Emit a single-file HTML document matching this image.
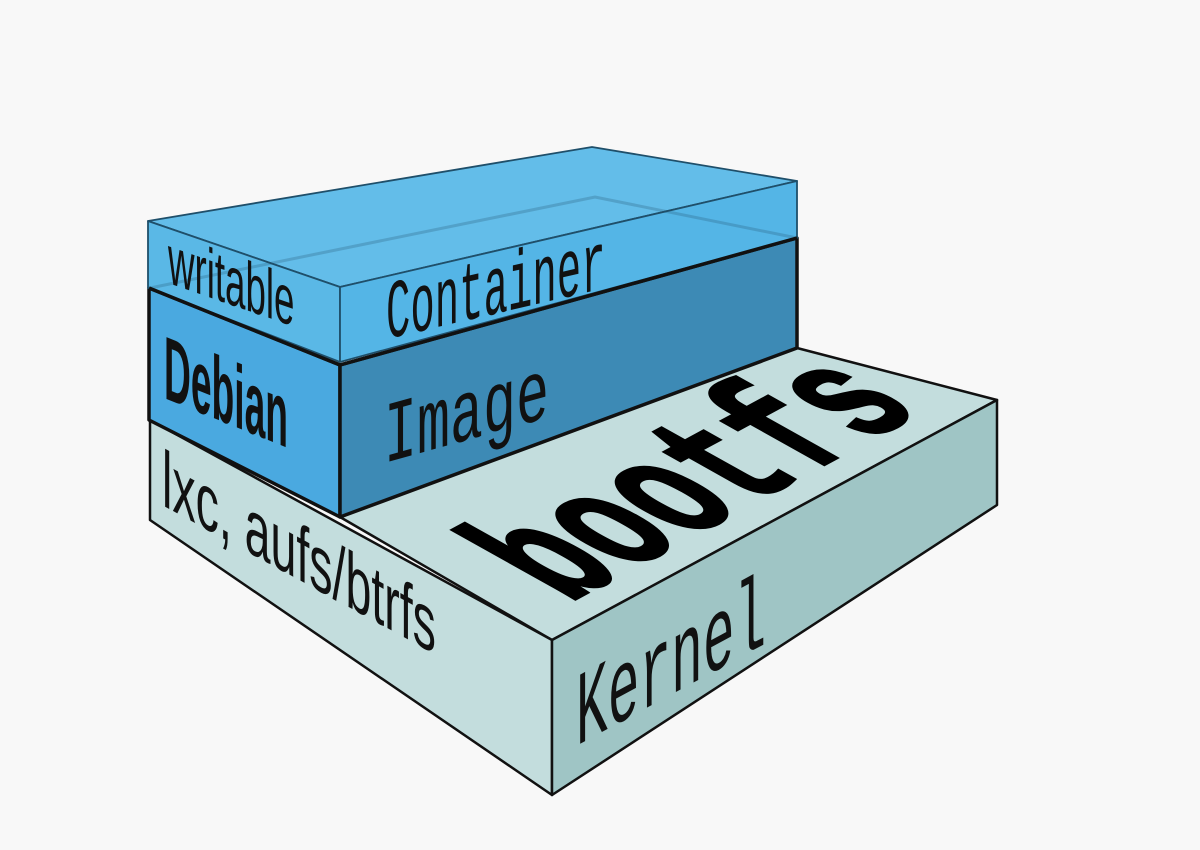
<!DOCTYPE html>
<html><head><meta charset="utf-8"><style>
html,body{margin:0;padding:0;background:#f8f8f8;}
svg{display:block;}
</style></head><body>
<svg width="1200" height="850" viewBox="0 0 1200 850" xmlns="http://www.w3.org/2000/svg">
<rect width="1200" height="850" fill="#f8f8f8"/>
<g stroke="#111" stroke-width="2.5" stroke-linejoin="round">
  <polygon points="340,517 797,348 997,400 552,640" fill="#c3dddd"/>
  <polygon points="150,420 552,640 552,795 150,520" fill="#c3dddd"/>
  <polygon points="552,640 997,400 997,505 552,795" fill="#9fc5c5"/>
  <polygon points="149,288 340,365 340,517 149,420" fill="#4aa9e0" stroke-width="3.5"/>
  <polygon points="340,365 797,238 797,348 340,517" fill="#3d8ab5" stroke-width="3.5"/>
</g>
<g stroke="#1f4f6a" stroke-width="1.8" stroke-linejoin="round">
  <polygon points="148,221 592,147 797,181 340,287" fill="#63bde9"/>
  <polygon points="148,221 340,287 340,362 148,288" fill="#5ab8e6"/>
  <polygon points="340,287 797,181 797,238 340,362" fill="#54b5e6"/>
</g>
<polyline points="150,288 595,197 797,238" fill="none" stroke="#1f4f6a" stroke-opacity="0.25" stroke-width="3"/>
<line x1="340" y1="365" x2="797" y2="238" stroke="#111" stroke-width="3.5"/>
<line x1="149" y1="288" x2="340" y2="365" stroke="#111" stroke-width="3.5"/>

<g font-family="'Liberation Mono', monospace" fill="#111">
  <text transform="matrix(0.813,-0.189,0,1.67,386,339)" font-size="50">Container</text>
  <text transform="matrix(1.1,-0.306,0,1.75,384,463)" font-size="50">Image</text>
  <text transform="matrix(1.057,-0.571,0,2.1,576,746)" font-size="50">Kernel</text>
  <text transform="matrix(0.99,-0.535,1.7,0.95,568,603)" font-size="100" font-weight="bold" fill="#000" stroke="#000" stroke-width="2">bootfs</text>
</g>
<g font-family="'Liberation Sans', sans-serif" fill="#111">
  <text transform="matrix(0.734,0.253,0,1.4,168,283)" font-size="50">writable</text>
  <text transform="matrix(0.744,0.30,0,1.8,164,398)" font-size="50" font-weight="bold">Debian</text>
  <text transform="matrix(0.93,0.508,0,1.6,162,505)" font-size="50">lxc, aufs/btrfs</text>
</g>
</svg>
</body></html>
